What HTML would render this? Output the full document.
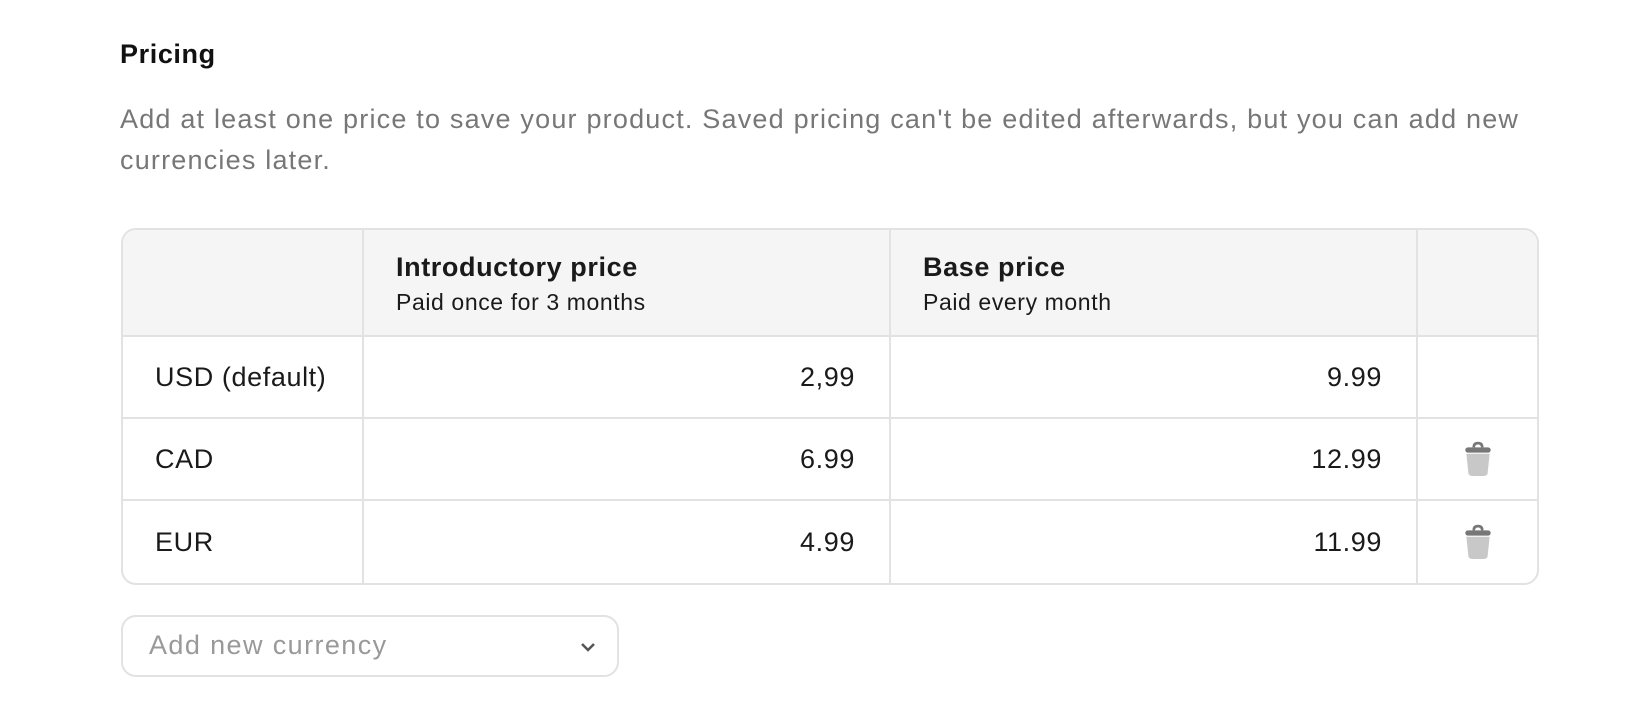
<!DOCTYPE html>
<html><head><style>
body{margin:0;background:#fff;font-family:"Liberation Sans",sans-serif;width:1644px;height:716px;overflow:hidden;position:relative}
h2{position:absolute;left:120px;top:39px;margin:0;font-size:27px;font-weight:bold;color:#111;letter-spacing:0.6px}
p.d{position:absolute;left:120px;top:99px;margin:0;width:1500px;font-size:27px;line-height:41px;color:#777;letter-spacing:1.2px}
table{position:absolute;left:121px;top:228px;width:1418px;border-collapse:separate;border-spacing:0;border:2px solid #e2e2e2;border-radius:15px;overflow:hidden;font-size:27px;color:#1a1a1a;table-layout:fixed;letter-spacing:0.6px}
td,th{border-right:2px solid #e2e2e2;border-bottom:2px solid #e2e2e2;padding:0 34px 0 32px;box-sizing:border-box;white-space:nowrap}
tr td:last-child,tr th:last-child{border-right:none}
tr:last-child td{border-bottom:none}
th{background:#f5f5f5;height:107px;text-align:left;font-weight:bold;vertical-align:top;padding-top:22px}
th small{display:block;font-weight:normal;font-size:23px;margin-top:6px;letter-spacing:0.6px}
td{height:82px}
td.n{text-align:right}
.sel{position:absolute;left:121px;top:615px;width:498px;height:62px;box-sizing:border-box;border:2px solid #e2e2e2;border-radius:15px;font-size:27px;color:#999;padding:13px 0 0 26px;letter-spacing:1.4px}
.sel svg{position:absolute;right:20px;top:24px}
</style></head><body>
<h2>Pricing</h2>
<p class="d">Add at least one price to save your product. Saved pricing can't be edited afterwards, but you can add new<br>currencies later.</p>
<table>
<colgroup><col style="width:241px"><col style="width:527px"><col style="width:527px"><col></colgroup>
<tr><th></th><th>Introductory price<small>Paid once for 3 months</small></th><th>Base price<small>Paid every month</small></th><th></th></tr>
<tr><td>USD (default)</td><td class="n">2,99</td><td class="n">9.99</td><td></td></tr>
<tr><td>CAD</td><td class="n">6.99</td><td class="n">12.99</td><td style="text-align:center;padding:0"><svg width="28" height="36" viewBox="0 0 26 34" style="vertical-align:middle"><path d="M9 6 Q9 2 13 2 Q17 2 17 6" fill="none" stroke="#777" stroke-width="2.5"/><rect x="1" y="6" width="24" height="5" rx="2.5" fill="#777"/><path d="M2 12 H24 L22 31 Q21 33 18 33 H8 Q5 33 4 31 Z" fill="#c8c8c8"/></svg></td></tr>
<tr><td>EUR</td><td class="n">4.99</td><td class="n">11.99</td><td style="text-align:center;padding:0"><svg width="28" height="36" viewBox="0 0 26 34" style="vertical-align:middle"><path d="M9 6 Q9 2 13 2 Q17 2 17 6" fill="none" stroke="#777" stroke-width="2.5"/><rect x="1" y="6" width="24" height="5" rx="2.5" fill="#777"/><path d="M2 12 H24 L22 31 Q21 33 18 33 H8 Q5 33 4 31 Z" fill="#c8c8c8"/></svg></td></tr>
</table>
<div class="sel">Add new currency<svg width="18" height="12" viewBox="0 0 18 12"><path d="M3 3 L9 9 L15 3" fill="none" stroke="#555" stroke-width="2.5"/></svg></div>
</body></html>
